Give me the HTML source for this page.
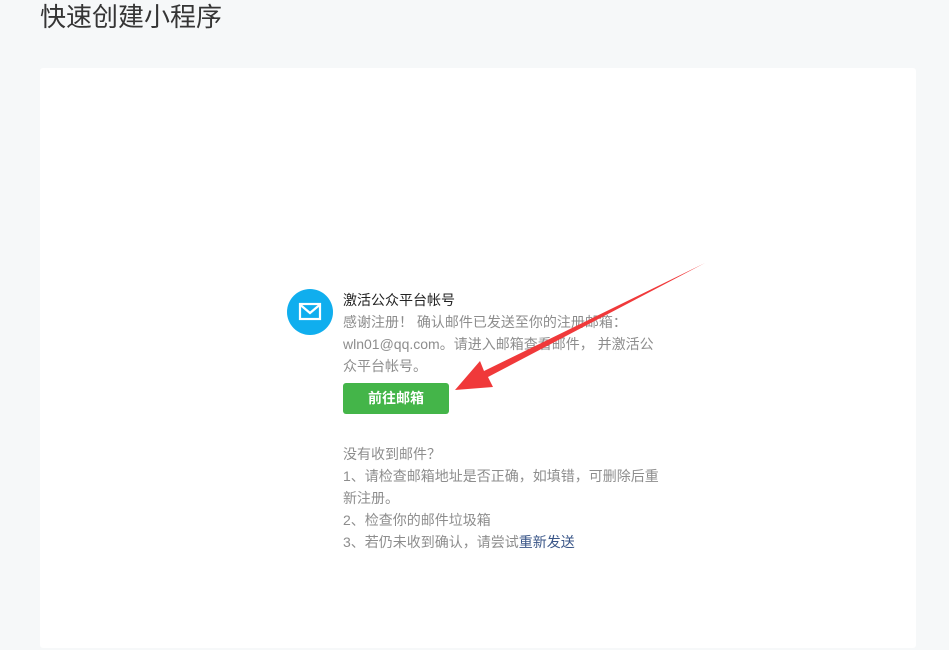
<!DOCTYPE html>
<html><head><meta charset="utf-8"><style>
html,body{margin:0;padding:0;}
body{width:949px;height:650px;background:#f6f8f9;position:relative;overflow:hidden;font-family:"Liberation Sans","Noto Sans CJK SC",sans-serif;}
h1{position:absolute;left:40px;top:0;margin:0;font-size:26px;font-weight:normal;color:#353535;line-height:34px;font-family:"Liberation Sans","Noto Sans CJK SC",sans-serif;}
.card{position:absolute;left:40px;top:68px;width:876px;height:580px;background:#fff;border-radius:3px;}
.icon{position:absolute;left:287px;top:289px;width:46px;height:46px;border-radius:50%;background:#10aeee;}
.txt{position:absolute;left:343px;font-size:14px;line-height:22px;color:#8d8d8d;width:330px;}
.btn{position:absolute;left:343px;top:383px;width:106px;height:31px;background:#44b549;border-radius:3px;color:#fff;font-size:14px;font-weight:bold;text-align:center;line-height:31px;}
a{color:#3a5688;text-decoration:none;}
</style></head><body>
<h1>快速创建小程序</h1>
<div class="card"></div>
<div class="icon"><svg width="46" height="46" viewBox="0 0 46 46"><rect x="13" y="15" width="20" height="15" fill="none" stroke="#fff" stroke-width="2.2"/><path d="M13.5 16 L23 24 L32.5 16" fill="none" stroke="#fff" stroke-width="2.2"/></svg></div>
<div class="txt" style="top:289px;color:#222;">激活公众平台帐号</div>
<div class="txt" style="top:311px;width:318px;">感谢注册！&nbsp;确认邮件已发送至你的注册邮箱：wln01@qq.com。请进入邮箱查看邮件，&nbsp;并激活公众平台帐号。</div>
<div class="btn">前往邮箱</div>
<div class="txt" style="top:443px;width:320px;">没有收到邮件？<br>1、请检查邮箱地址是否正确，如填错，可删除后重新注册。<br>2、检查你的邮件垃圾箱<br>3、若仍未收到确认，请尝试<a>重新发送</a></div>
<svg style="position:absolute;left:0;top:0" width="949" height="650"><polygon points="455,390 493,387 488,377 705,263 484,371 480,361" fill="#f0393a"/></svg>
</body></html>
